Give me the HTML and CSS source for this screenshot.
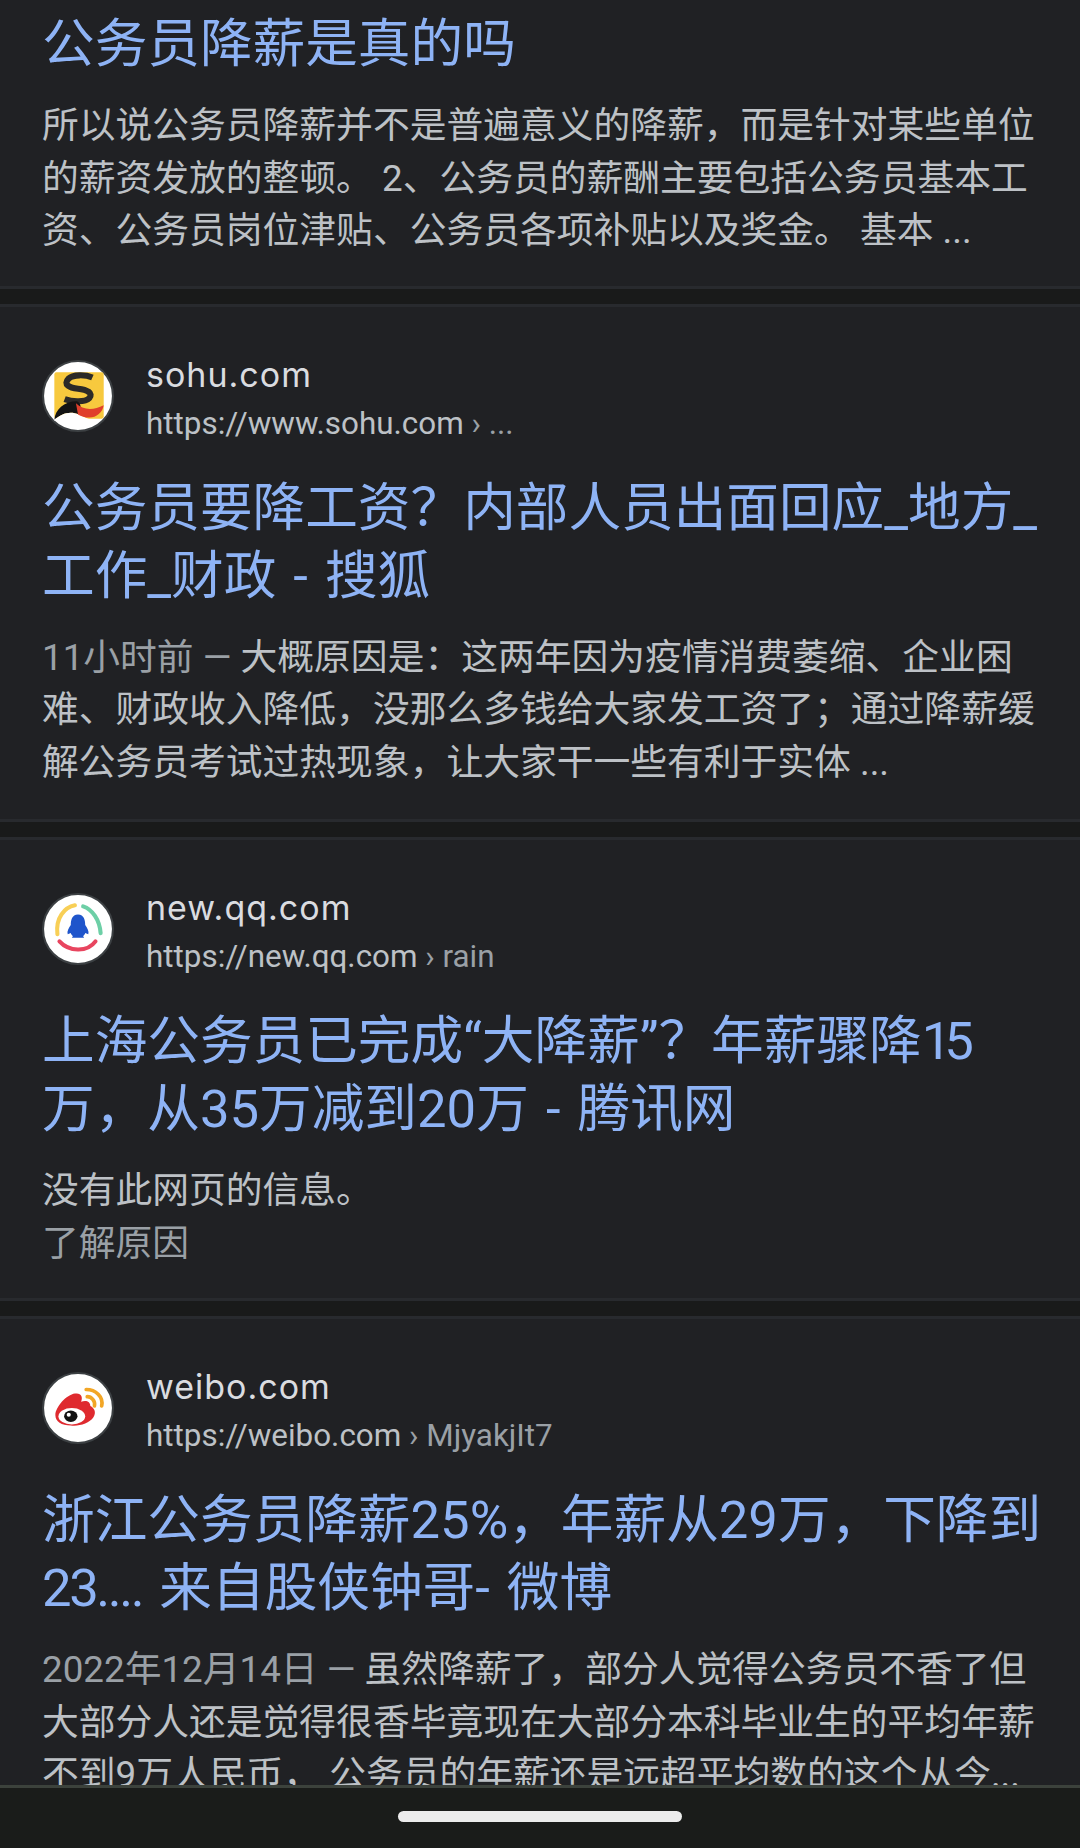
FILE: index.html
```html
<!DOCTYPE html>
<html lang="zh-CN">
<head>
    <meta charset="UTF-8">
    <meta name="viewport" content="width=device-width, initial-scale=1.0">
    <title>公务员降薪</title>
    <link rel="stylesheet" href="styles.css">
</head>
<body>
    <div class="screen">
        <!-- Result cut off by the top of the screen -->
        <div class="result result-first">
            <a class="result-title">公务员降薪是真的吗</a>
            <p class="snippet">所以说公务员降薪并不是普遍意义的降薪，而是针对某些单位<br>的薪资发放的整顿。 2、公务员的薪酬主要包括公务员基本工<br>资、公务员岗位津贴、公务员各项补贴以及奖金。 基本 ...</p>
        </div>

        <div class="result">
            <div class="site">
                <svg class="favicon" viewBox="0 0 70 70">
                    <circle cx="35" cy="35" r="34" fill="#fff" stroke="#3c4043" stroke-width="2"/>
                    <rect x="12" y="12" width="48" height="45" rx="2" fill="#f7c93e"/>
                    <path d="M49 17 C42 14 30 14 26 18 C20 24 27 27 35 28 C44 29 50 32 46 37 C42 41 30 41 22 38" fill="none" stroke="#2b2a28" stroke-width="6"/>
                    <path d="M12 58 C13 48 21 40 34 40 C39 42 38 50 36 53 C27 49 19 52 12 58Z" fill="#141414"/>
                    <path d="M12 58 C19 52 27 49 36 53 C40 55 44 57 48 58 L12 59Z" fill="#fff"/>
                    <path d="M33 42 C40 49 50 49 60 44 C59 51 53 56 46 56 C42 56 38 55 35 53Z" fill="#e0402c"/>
                </svg>
                <div class="site-text">
                    <div class="site-name">sohu.com</div>
                    <div class="site-url">https://www.sohu.com <span class="crumb">› ...</span></div>
                </div>
            </div>
            <a class="result-title">公务员要降工资？内部人员出面回应_地方_<br>工作_财政 - 搜狐</a>
            <p class="snippet"><span class="date">11小时前 — </span>大概原因是：这两年因为疫情消费萎缩、企业困<br>难、财政收入降低，没那么多钱给大家发工资了；通过降薪缓<br>解公务员考试过热现象，让大家干一些有利于实体 ...</p>
        </div>

        <div class="result result-short">
            <div class="site">
                <svg class="favicon" viewBox="0 0 70 70">
                    <circle cx="35" cy="35" r="34" fill="#fff" stroke="#3c4043" stroke-width="2"/>
                    <path d="M32 12 C22 14 13 24 15 40" fill="none" stroke="#f8cf56" stroke-width="4" stroke-linecap="round"/>
                    <path d="M40 13 C49 16 56 26 57 39" fill="none" stroke="#6dcfa6" stroke-width="4" stroke-linecap="round"/>
                    <path d="M17 47 C26 57 44 58 52 47" fill="none" stroke="#e8455f" stroke-width="4" stroke-linecap="round"/>
                    <path d="M35 21 C41 21 42 27 42 31 C44 34 46 37 45 40 L42 39 C42 40 41 41 40 42 L41 43.5 H29 L30 42 C29 41 28 40 28 39 L25 40 C24 37 26 34 28 31 C28 27 29 21 35 21Z" fill="#1f55cb"/>
                </svg>
                <div class="site-text">
                    <div class="site-name">new.qq.com</div>
                    <div class="site-url">https://new.qq.com <span class="crumb">› rain</span></div>
                </div>
            </div>
            <a class="result-title">上海公务员已完成“大降薪”？年薪骤降<span class="num-tight">15</span><br>万，从35万减到20万 - 腾讯网</a>
            <p class="snippet">没有此网页的信息。<br><span class="date">了解原因</span></p>
        </div>

        <div class="result">
            <div class="site">
                <svg class="favicon" viewBox="0 0 70 70">
                    <circle cx="35" cy="35" r="34" fill="#fff" stroke="#3c4043" stroke-width="2"/>
                    <path d="M13 42 C13 34 24 22 32 21 C38 20 40 24 38 29 C43 27 47 29 47 33 C51 35 53 39 50 44 C46 50 36 53 28 52 C19 52 13 48 13 42Z" fill="#df2a2f"/>
                    <ellipse cx="29" cy="43" rx="13" ry="8" fill="#fff"/>
                    <ellipse cx="28" cy="43" rx="6.5" ry="5.5" fill="#111"/>
                    <circle cx="26" cy="41.5" r="2" fill="#fff"/>
                    <path d="M43 17 C52 17 60 24 58 33" fill="none" stroke="#f2a626" stroke-width="3.6" stroke-linecap="round"/>
                    <path d="M44 24 C48 24 52 28 51 33" fill="none" stroke="#f2a626" stroke-width="3.6" stroke-linecap="round"/>
                </svg>
                <div class="site-text">
                    <div class="site-name">weibo.com</div>
                    <div class="site-url">https://weibo.com <span class="crumb">› MjyakjIt7</span></div>
                </div>
            </div>
            <a class="result-title">浙江公务员降薪25%，年薪从29万，下降到<br><span class="dots">23....</span> 来自股侠钟哥- 微博</a>
            <p class="snippet"><span class="date">2022年12月14日 — </span>虽然降薪了，部分人觉得公务员不香了但<br>大部分人还是觉得很香毕竟现在大部分本科毕业生的平均年薪<br>不到9万人民币， 公务员的年薪还是远超平均数的这个从今...</p>
        </div>

        <!-- Android gesture bar sits on top of the page -->
        <div class="nav-bar">
            <div class="nav-pill"></div>
        </div>
    </div>
</body>
</html>
```

FILE: styles.css
```css
body {
    margin: 0;
    background: #191a1a;
    font-family: Roboto, "Noto Sans CJK SC", sans-serif;
}

.screen {
    position: relative;
    width: 1080px;
    height: 1848px;
    overflow: hidden;
}

/* Result cards */
.result {
    background: #202124;
    border-top: 3px solid #282a2e;
    border-bottom: 3px solid #282a2e;
    padding: 53px 42px 30px;
    margin-bottom: 15px;
}

.result-first {
    border-top: 0;
    padding-top: 10px;
    padding-bottom: 28px;
}

.result-short {
    padding-bottom: 28px;
}

/* Favicon + domain + url */
.site {
    display: flex;
    align-items: center;
    gap: 32px;
    height: 72px;
    margin-bottom: 42px;
}

.favicon {
    width: 72px;
    height: 72px;
    flex-shrink: 0;
}

.site-text {
    padding-top: 6px;
}

.site-name {
    font-family: Inter, Roboto, sans-serif;
    font-size: 34px;
    line-height: 50px;
    letter-spacing: 1px;
    color: #dadce0;
}

.site-url {
    font-size: 31.4px;
    line-height: 48px;
    color: #bdc1c6;
}

.crumb {
    color: #9aa0a6;
}

.result-title {
    display: block;
    font-size: 52.65px;
    line-height: 68px;
    color: #8eb3f5;
    white-space: nowrap;
    word-spacing: 4px;
}

/* The "1" in the reference font is much narrower than Roboto's */
.num-tight {
    letter-spacing: -7px;
}

.dots {
    letter-spacing: -2.4px;
}

.snippet {
    margin: 22px 0 0;
    font-size: 36.78px;
    line-height: 52.5px;
    color: #bdc1c6;
    white-space: nowrap;
}

.date {
    color: #9aa0a6;
}

/* Bottom navigation bar */
.nav-bar {
    position: absolute;
    left: 0;
    right: 0;
    bottom: 0;
    height: 60px;
    background: #1a1c1a;
    border-top: 3px solid #3c423c;
}

.nav-pill {
    position: absolute;
    left: 398px;
    top: 23px;
    width: 284px;
    height: 11px;
    border-radius: 6px;
    background: #ececec;
}
```
